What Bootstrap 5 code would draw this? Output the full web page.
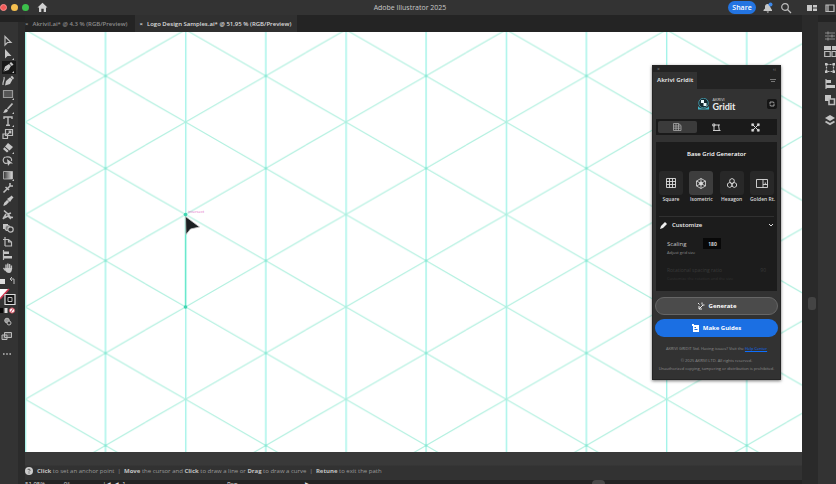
<!DOCTYPE html>
<html lang="en">
<head>
<meta charset="utf-8">
<meta name="viewport" content="width=device-width, initial-scale=1">
<title>Adobe Illustrator 2025</title>
<link href="https://cdn.jsdelivr.net/npm/bootstrap@5.3.0/dist/css/bootstrap.min.css" rel="stylesheet">
<style>
body{font-family:"Open Sans","Noto Sans",sans-serif;font-size:7px;line-height:10px;background:#323232;color:#c8c8c8}
button,input{font:inherit;color:inherit;border:0;padding:0;background:none;line-height:10px}
svg{display:block;flex:none}
.ico{width:12px;height:12px;fill:none;stroke:#bdbdbd;stroke-width:1.2}
.ico .solid{fill:#c6c6c6;stroke:none}
.titlebar{height:15px;background:#333}
.side{flex:1 1 0}
.actions{gap:6px}
.light{width:7px;height:7px;border-radius:50%}
.light.r{background:#f25a58;border:1px solid #f98e8c}.light.y{background:#f5bf4f}.light.g{background:#3cc04b}
.share{background:#2374e1;color:#fff;font-weight:600;width:28px;height:13px;border-radius:7px}
.toolcol{width:25px;background:#2b2b2b;border-top:7px solid #222}
.toolbox{width:18px;background:#333;padding-top:12px}
.toollist{height:241px}
.tool{width:14px;height:13px}
.tool.on{background:#181818}
.tabs{height:17px;background:#242424;font-size:6px}
.doc{padding:0 8px 0 0;color:#8c8c8c;font-weight:600}
.doc.on{background:#303030;color:#dedede;padding:0 6px 0 4px}
.art{background:#fff;min-height:0;overflow:hidden}
.hint{height:28px;background:linear-gradient(#393939 0 13px,#323232 14px);padding-top:10px;font-size:6px;color:#9b9b9b}
.hint b{color:#c3c3c3}
.status{height:4px;background:#242424;overflow:hidden;color:#ddd;font-size:6px;line-height:8px}
.status span{flex:none;width:5%}
.status .wide{width:16%}.status .rest{width:37%}
.vscroll{width:16px;background:#2a2a2a;padding:282px 2px 0 0}
.thumb{width:8px;height:13px;border-radius:3px;background:#444}
.status .knob{width:13px;height:8px;border-radius:4px;background:#484848}
.dock{width:18px;background:#333;border-top:7px solid #242424;padding-top:8px}
.gridit{right:21px;top:33px;width:129px;background:#323232;box-shadow:0 1px 3px #0008;border:1px solid #252525;padding-bottom:6px}
.phead{background:#232323}
.pclose{height:6px;font-size:5px;line-height:6px;color:#888}
.ptab{background:#323232;color:#ddd;font-size:6px;font-weight:700;line-height:17px;padding:0 4px}
.pbody{padding:0 2px}
.brandrow{height:30px}
.brand{font-family:Lato,sans-serif;font-size:9px;line-height:9px;color:#eee;font-weight:700}
.tiny{font-size:4px;line-height:8px;color:#8f8f8f}
.over{line-height:4px;color:#ddd}
.refresh{width:10px;height:10px;background:#151515;border-radius:2px;right:1px;top:10px}
.seg{background:#1a1a1a;padding:2px;height:16px;margin:0 1px}
.seg button{border-radius:2px}.seg .on{background:#3b3b3b}
.box{background:#1c1c1c;margin:7px 1px 0;height:149px;padding:7px 3px 0}
.tile{width:24px;height:24px;background:#282828;border-radius:3px}
.heading{font-size:6px;font-weight:600}
.on>.tile{background:#3d3d3d}
.kind{width:24px;font-size:5px;line-height:9px;font-weight:600;color:#ddd}
.cust{border-top:1px solid #303030;margin-top:12px;padding-top:3px;color:#eee;font-weight:600;font-size:6px}
.scalerow{font-size:6px;gap:17px}
.num{width:18px;height:11px;background:#080808;color:#eee;font-weight:600;font-size:5px;text-align:center}
.dim{color:#3a3a3a;font-size:5px}
.tiny.dim{font-size:4px;color:#333}
.actionset{margin-top:6px}
.pill{height:18px;border-radius:9px;color:#fff;font-weight:700;font-size:6px}
.gen{background:#4b4b4b;border:1px solid #666}
.make{background:#1b6fe3}
.snap{font-size:4px;fill:#df69c6}
</style>
<script src="https://cdn.jsdelivr.net/npm/bootstrap@5.3.0/dist/js/bootstrap.bundle.min.js"></script>
</head>
<body class="vh-100 overflow-hidden d-flex flex-column">
<header class="titlebar d-flex align-items-center flex-shrink-0">
  <div class="side d-flex align-items-center gap-1">
    <span class="light r"></span><span class="light y"></span><span class="light g"></span>
    <svg class="ms-1" width="11" height="11" viewBox="0 0 11 11" fill="#d0d0d0"><path d="M5.500 .8 10.500 5.500H9V10H6.700V6.800H4.300V10H2V5.500H.5z"/></svg>
  </div>
  <div class="pe-3">Adobe Illustrator 2025</div>
  <div class="side actions d-flex align-items-center justify-content-end">
    <button class="share">Share</button>
    <svg class="ico" viewBox="0 0 12 12"><path class="solid" d="M1.500 9V8L3 6.500V4.500C3 2.500 5 1.500 7 2.500L9 6.500 10 8V9zM4.500 9.500H7L6 11z"/><circle cx="8.500" cy="2.500" r="2" fill="#3b86e8" stroke="none"/></svg>
    <svg class="ico" viewBox="0 0 12 12"><circle cx="5" cy="5" r="3.300"/><path d="m7.500 7.500 3.500 3.500"/></svg>
    <svg class="ico ms-2" viewBox="0 0 12 12"><path class="solid" d="M1 3h5v6H1zM7 3h4v2.500H7zM7 6.500h4V9H7z"/></svg>
    <svg class="ico" viewBox="0 0 12 12"><path d="M2 3h8v6.500H2zM4 3v6.500"/></svg>
  </div>
</header>
<div class="d-flex flex-grow-1 overflow-hidden">
  <aside class="toolcol flex-shrink-0 d-flex">
    <div class="toolbox d-flex flex-column align-items-center">
      <div class="toollist d-flex flex-column justify-content-between flex-shrink-0">
        <button class="tool" aria-label="Selection"><svg class="ico" viewBox="0 0 12 12"><path d="M3 1.500V10L5.500 7.500H9z"/></svg></button>
        <button class="tool" aria-label="Direct selection"><svg class="ico" viewBox="0 0 12 12"><path class="solid" d="M3 1V10.500L5.500 8H9.500z"/><path class="solid" d="M12 10v2h-2z"/></svg></button>
        <button class="tool on" aria-label="Pen"><svg class="ico" viewBox="0 0 12 12"><path class="solid" d="M1.500 10.500 3 5.500 7 3 9 5 6.500 9zM7.500 2.500 9 1l2.500 2.500L9.800 5zM12 10v2h-2z"/><path d="m1.500 10.500 3-3" stroke="#222" stroke-width=".6"/></svg></button>
        <button class="tool" aria-label="Curvature"><svg class="ico" viewBox="0 0 12 12"><path class="solid" d="m3 10.500 1-4.500 4-3.500 2.500 2L8 9zM8.500 2 10 .8 12 3l-1 1.500z"/><path d="M1 10C.5 6 3 5 2 2"/></svg></button>
        <button class="tool" aria-label="Rectangle"><svg class="ico" viewBox="0 0 12 12"><path d="M1.500 2.500h9v7h-9z" fill="#555" stroke="#999"/><path class="solid" d="M12 10v2h-2z"/></svg></button>
        <button class="tool" aria-label="Paintbrush"><svg class="ico" viewBox="0 0 12 12"><path class="solid" d="M1 10.500C2.500 10 2 7.500 4 7c2 0 2.500 2 1 3-1 .8-3 .8-4 .5zM12 10v2h-2z"/><path d="m5.500 7 5-5.500" stroke-width="1.800"/></svg></button>
        <button class="tool" aria-label="Type"><svg class="ico" viewBox="0 0 12 12"><path d="M2 4V2h8v2M6 2v8.500M4 10.300h4" stroke-width="1.400"/><path class="solid" d="M12 10v2h-2z"/></svg></button>
        <button class="tool" aria-label="Scale"><svg class="ico" viewBox="0 0 12 12"><path d="M3.500 1.500h7v6h-7zM1 6h4.500v4.500H1zM6 6l2.500-2.500M6.500 3.200h2.200v2.200"/></svg></button>
        <button class="tool" aria-label="Eraser"><svg class="ico" viewBox="0 0 12 12"><path class="solid" d="m6 1 5 4-3.500 3.500L3 4.500zM2.500 5.200 6.700 9 5 10.500 1 7zM12 10v2h-2z"/></svg></button>
        <button class="tool" aria-label="Shape builder"><svg class="ico" viewBox="0 0 12 12"><path d="M6 8C0 10 0 2 4 2c5-1 6 2 5.500 4"/><path class="solid" d="m5 4 6 4.500H8L6 11z"/></svg></button>
        <button class="tool" aria-label="Gradient"><svg class="ico" viewBox="0 0 12 12"><defs><linearGradient id="gr"><stop stop-color="#333"/><stop offset="1" stop-color="#ddd"/></linearGradient></defs><path fill="url(#gr)" stroke-width=".8" d="M1.500 2.500h9v7.500h-9z"/><path class="solid" d="M12 10v2h-2z"/></svg></button>
        <button class="tool" aria-label="Width"><svg class="ico" viewBox="0 0 12 12"><path d="M1.500 10.500 8 4M8 1v3h3M3.500 5l3.500 3" stroke-width="1.600"/></svg></button>
        <button class="tool" aria-label="Eyedropper"><svg class="ico" viewBox="0 0 12 12"><path d="m1.500 10.500 5-5"/><path class="solid" d="M5 4 8 2l1.500-1.500L11.500 2.500 10 4 8 7zM2 8l3-3 2 2-3 3-2 .5z"/></svg></button>
        <button class="tool" aria-label="Puppet warp"><svg class="ico" viewBox="0 0 12 12"><path d="M2 1.500 6 5l3-1M4 5 1 10M6 5l2 3 3 .5M2 9l4-2 3 3" stroke-width="1.600"/></svg></button>
        <button class="tool" aria-label="Blend"><svg class="ico" viewBox="0 0 12 12"><path class="solid" d="M1 2h5v5H1z"/><circle cx="5.500" cy="6" r="2.500" fill="#777"/><circle cx="8.500" cy="7.500" r="2.700" fill="#333"/></svg></button>
        <button class="tool" aria-label="Artboard"><svg class="ico" viewBox="0 0 12 12"><path d="M3 1v9M1 3.500h5.500L9.500 6v4H3M6.500 3.500V6h3"/></svg></button>
        <button class="tool" aria-label="Align"><svg class="ico" viewBox="0 0 12 12"><path d="M1.500 1v10"/><path class="solid" d="M2 2.500h5V5H2zM2 7h8v2.500H2z"/></svg></button>
        <button class="tool" aria-label="Hand"><svg class="ico" viewBox="0 0 12 12"><path d="M4 7V2.500M5.800 6V1.500M7.600 6V2M9.400 7V3.500M3.500 8.500 1.500 6" stroke-width="1.400"/><path class="solid" d="M3.300 6h6.800C10 9 9 11 7 11S4 10 3 8z"/></svg></button>
      </div>
      <svg width="18" height="86" viewBox="0 0 18 86" fill="none" stroke="#bbb" class="align-self-start">
        <path d="M0 4h5v5H0z" fill="#ddd" stroke="none"/><path d="M11 4h3v5M12 2l-2 2 2 2"/>
        <path d="M0 14h9L0 24z" fill="#fff" stroke="none"/><path d="M9 14 0 24" stroke="#d0344e" stroke-width="1.600"/>
        <path d="M5 19.500h10v10H5z" fill="#161616" stroke="#ddd" stroke-width="1.200"/><path d="M8 22.500h4v4H8z"/>
        <path d="M0 33h3v5H0z" fill="#080808" stroke="none"/><path d="M4.500 33h3v5h-3z" fill="#ddd" stroke="none"/><circle cx="12" cy="35.500" r="2.600" fill="#fff" stroke="#c8505d"/><path d="m10.500 37.500 3-4" stroke="#d0344e"/>
        <circle cx="7" cy="45.500" r="2.300" fill="#999"/><circle cx="9" cy="48" r="2" fill="#333"/>
        <path d="M4.500 57.500h7v5h-7zM2 60h5v4.500H2z" fill="#555"/>
        <path d="M3 79h1.600M6.200 79h1.600M9.400 79H11" stroke-width="1.600"/>
      </svg>
    </div>
  </aside>
  <main class="d-flex flex-column flex-grow-1 overflow-hidden">
    <nav class="tabs d-flex flex-shrink-0" aria-label="Documents">
      <button class="doc"><span class="d-flex align-items-center gap-1"><span>×</span><span>AkriviI.ai* @ 4.3 % (RGB/Preview)</span></span></button>
      <button class="doc on"><span class="d-flex align-items-center gap-1"><span>×</span><span>Logo Design Samples.ai* @ 51,95 % (RGB/Preview)</span></span></button>
    </nav>
    <section class="art position-relative flex-grow-1">
      <svg class="position-absolute w-100 h-100" aria-hidden="true">
        <defs><pattern id="iso" patternUnits="userSpaceOnUse" x="-40" y="-2.300" width="160.300" height="92.400">
          <path d="M40.500 0v93M120.500 0v93" stroke="#a2f3e8" stroke-width="1.400"/>
          <path d="M0 23.100 40.300 0l80.200 46.200L160.300 69.300M0 69.300l40.300 23.100 80.200-46.200L160.300 23.100" fill="none" stroke="#b0f0df" stroke-width="1.100"/>
          <circle cx="120.500" cy="46.200" r="1.300" fill="#86ead4"/>
        </pattern></defs>
        <rect width="100%" height="100%" fill="url(#iso)"/>
        <path d="M160.500 182.500v92.500" stroke="#6ae8cc" stroke-width="1.400"/>
        <circle cx="160.500" cy="182.500" r="1.800" fill="#3cd6b0"/><circle cx="160.500" cy="275" r="1.800" fill="#3cd6b0"/>
        <text class="snap" x="163" y="181">intersect</text>
        <path d="m160.500 184.500 14 10.500-9 2-4.500 5.500z" fill="#1c2022" stroke="#c5c5c5" stroke-width=".8"/>
      </svg>
      <div class="gridit position-absolute">
        <div class="phead">
          <div class="pclose d-flex justify-content-between px-1"><span>×</span><span>‹‹</span></div>
          <div class="d-flex justify-content-between"><span class="ptab">Akrivi Gridit</span><svg class="align-self-center me-1" width="6" height="6" stroke="#777"><path d="M0 1.500h6M1 3.500h4"/></svg></div>
        </div>
        <div class="pbody">
          <div class="brandrow d-flex align-items-center justify-content-center gap-1 position-relative">
            <svg width="11" height="12" viewBox="0 0 11 12"><circle cx="5.500" cy="5" r="4.800" fill="#152a31" stroke="#4aa6b8" stroke-width=".8"/><path d="M3 2h3v3H3zM5.500 5h3v3h-3z" fill="#eefafc"/><path d="M0 8c1 3 9 4 11 0v3.500H0z" fill="#43b5c7"/></svg>
            <div><div class="tiny over">AKRIVI</div><div class="brand">Gridit</div></div>
            <button class="refresh position-absolute d-flex align-items-center justify-content-center" aria-label="Refresh"><svg width="6" height="6" viewBox="0 0 6 6" fill="none" stroke="#bbb" stroke-width=".8"><path d="M1 3.500V1h3.500L5 2M5 2.500V5H1.500L1 4"/></svg></button>
          </div>
          <div class="seg d-flex">
            <button class="flex-fill on d-flex justify-content-center align-items-center" aria-label="Grid"><svg width="9" height="8" viewBox="0 0 9 8" fill="none" stroke="#aaa" stroke-width=".8"><path d="M.5 .5h5l2.500 2v5H.5zM.5 3h7M.5 5.200h7M3 .5v7M5.500 .5v7"/></svg></button>
            <button class="flex-fill d-flex justify-content-center align-items-center" aria-label="Path"><svg width="9" height="9" viewBox="0 0 9 9" fill="none" stroke="#ccc"><path d="M2 7.500V2h4.500l.8 5.500z"/><path d="M.8 1h2v2h-2zM6 2h2M6.500 7.500h2M1 7.500h2"/></svg></button>
            <button class="flex-fill d-flex justify-content-center align-items-center" aria-label="Nodes"><svg width="9" height="9" viewBox="0 0 9 9" fill="none" stroke="#ddd"><path d="m1 1 7 7M8 1 1 8"/><path fill="#ddd" d="M.7 .7h2v2h-2zM6.300 .7h2v2h-2zM.7 6.300h2v2h-2zM6.300 6.300h2v2h-2z" stroke-width=".5"/></svg></button>
          </div>
          <div class="box">
            <div class="heading text-center text-white">Base Grid Generator</div>
            <div class="d-flex justify-content-between mt-2 pt-1">
              <button class="kind"><span class="tile d-flex align-items-center justify-content-center"><svg width="10" height="10" viewBox="0 0 10 10" fill="none" stroke="#ddd" stroke-width=".9"><path d="M.5 .5h9v9h-9zM3.500 .5v9M6.500 .5v9M.5 3.500h9M.5 6.500h9"/></svg></span>Square</button>
              <button class="kind on"><span class="tile d-flex align-items-center justify-content-center"><svg width="10" height="11" viewBox="0 0 10 11" fill="none" stroke="#ddd" stroke-width=".8"><path d="M5 .5 9.500 3v5L5 10.500.5 8V3zM5 .5v10M.5 3l9 5M9.500 3l-9 5"/><circle cx="5" cy="5.500" r="1.500" fill="#ddd"/></svg></span>Isometric</button>
              <button class="kind"><span class="tile d-flex align-items-center justify-content-center"><svg width="10" height="10" viewBox="0 0 10 10" fill="none" stroke="#ddd" stroke-width=".9"><path d="m5 .5 2.200 1.200v2.600L5 5.500 2.800 4.300V1.700zM2.700 4.500l2.200 1.200v2.600L2.700 9.500.5 8.300V5.700zM7.300 4.500l2.200 1.200v2.600L7.300 9.500 5.100 8.300V5.700z"/></svg></span>Hexagon</button>
              <button class="kind"><span class="tile d-flex align-items-center justify-content-center"><svg width="12" height="9" viewBox="0 0 12 9" fill="none" stroke="#ddd" stroke-width=".9"><path d="M.5 .5h11v8H.5zM7 .5v8M7 5.500h4.500M9.300 5.500V3.500"/></svg></span><span class="text-nowrap">Golden Rt.</span></button>
            </div>
            <div class="cust d-flex align-items-center"><svg class="me-1" width="9" height="9" viewBox="0 0 9 9" fill="#eee"><path d="M1 8 2 5 6 1l2 2-4 4z"/></svg><span class="flex-grow-1">Customize</span><svg width="6" height="5" fill="none" stroke="#ddd"><path d="m1 1 2 2 2-2"/></svg></div>
            <div class="scalerow d-flex align-items-center ps-2 mt-2"><label for="scale">Scaling</label><input class="num" id="scale" value="180"></div>
            <div class="tiny ps-2">Adjust grid size</div>
            <div class="dim d-flex justify-content-between px-2 mt-1 pt-1"><span>Rotational spacing ratio</span><span>90</span></div>
            <div class="tiny dim ps-2">Customize the rotation and the size</div>
          </div>
          <div class="actionset d-grid gap-1">
            <button class="pill gen d-flex align-items-center justify-content-center gap-1"><svg width="8" height="8" viewBox="0 0 8 8" fill="none" stroke="#eee"><path d="m2 7 4-4M1 1l1.500 1.500M5 .5v2M7.500 3h-2M2 4v3h3"/></svg>Generate</button>
            <button class="pill make d-flex align-items-center justify-content-center gap-1"><svg width="7" height="8" viewBox="0 0 7 8" fill="#fff"><path d="M0 0h2v1h5v7H1V2H0zm2.500 3v1H4V3zm0 3h3V5h-3z" fill-rule="evenodd"/></svg>Make Guides</button>
          </div>
          <div class="tiny text-center text-nowrap mt-1 pt-1">AKRIVI GRIDIT Std. Having issues? Visit the <a href="#" class="text-primary">Help Center</a></div>
          <div class="tiny text-center text-nowrap pt-1">© 2025 AKRIVI LTD. All rights reserved.<br>Unauthorized copying, tampering or distribution is prohibited.</div>
        </div>
      </div>
    </section>
    <div class="hint flex-shrink-0 d-flex align-items-center">
      <svg width="8" height="8" viewBox="0 0 8 8"><circle cx="4" cy="4" r="4" fill="#ccc"/><path d="M2.800 3C3 1.500 5.500 2 5 3.500L4 4.500M4 5.500v1" fill="none" stroke="#444" stroke-width=".9"/></svg>
      <span class="ps-1 text-nowrap"><b>Click</b> to set an anchor point &nbsp;|&nbsp; <b>Move</b> the cursor and <b>Click</b> to draw a line or <b>Drag</b> to draw a curve &nbsp;|&nbsp; <b>Retune</b> to exit the path</span>
    </div>
    <div class="status flex-shrink-0 d-flex"><span>51,95%</span><span>0°</span><span class="wide">|◀ &nbsp;◀ &nbsp;1</span><span class="">Pen</span><span></span><span class="rest">▶</span><span class="knob"></span></div>
  </main>
  <div class="vscroll flex-shrink-0 d-flex justify-content-end"><span class="thumb"></span></div>
  <aside class="dock flex-shrink-0 d-flex flex-column align-items-end gap-1">
    <svg class="ico" viewBox="0 0 12 12"><path d="M1 3h10M1 6h10M1 9h10M4 1.500v3M8 4.500v3M4 7.500v3" stroke="#888"/></svg>
    <svg class="ico" viewBox="0 0 12 12"><path class="solid" d="M0 0h7v4H0zM8 0h4v4H8z"/><path d="M.7 5.500h5.500v5H.7zM8 5.500h4v5H8z"/></svg>
    <svg class="ico" viewBox="0 0 12 12"><path d="M2.500 2.500h7v7h-7z" stroke-dasharray="2 1"/><path class="solid" d="M1 1h2.500v2.500H1zM8.500 1H11v2.500H8.500zM1 8.500h2.500V11H1zM8.500 8.500H11V11H8.500z"/></svg>
    <svg class="ico" viewBox="0 0 12 12"><path d="M2 1v10"/><path class="solid" d="M2 2h5v3H2zM2 7h9v3H2z"/></svg>
    <svg class="ico" viewBox="0 0 12 12"><path class="solid" d="M1 1h6v6H1z"/><path d="M5 5h5.500v5.500H5z" fill="#333" stroke-width="1.600"/></svg>
    <svg class="ico mt-1" viewBox="0 0 12 12"><path class="solid" d="m6 1 5 3-5 3-5-3z"/><path d="m1.500 7.500 4.500 2.500 4.500-2.500" stroke-width="2"/></svg>
  </aside>
</div>
</body>
</html>
